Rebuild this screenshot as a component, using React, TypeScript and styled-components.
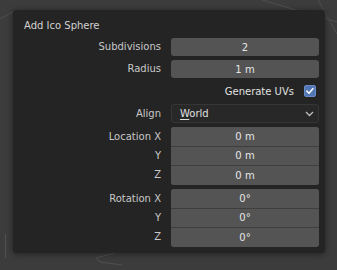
import React from "react";
import styled, { createGlobalStyle } from "styled-components";

const Global = createGlobalStyle`
  html, body { margin: 0; padding: 0; background: #3c3c3c; }
  body { width: 337px; height: 270px; overflow: hidden; font-family: "DejaVu Sans", "Liberation Sans", sans-serif; }
`;

const Viewport = styled.div`
  position: relative;
  width: 337px;
  height: 270px;
  background: #3c3c3c;
  padding: 10px 0 0 13px;
  box-sizing: border-box;
`;

const Mesh = styled.svg`
  position: absolute;
  left: 0;
  top: 0;
  width: 337px;
  height: 270px;
  pointer-events: none;
`;

const Panel = styled.div`
  position: relative;
  width: 312px;
  height: 243px;
  box-sizing: border-box;
  background: #242424;
  border-radius: 3px;
  box-shadow: 0 1px 6px rgba(0, 0, 0, 0.45);
  padding: 0 6px 6px 0;
  display: flex;
  flex-direction: column;
`;

const Header = styled.div`
  height: 29px;
  padding: 3px 0 0 11px;
  box-sizing: border-box;
  display: flex;
  align-items: center;
  font-size: 10px;
  color: #d2d2d2;
`;

const Rows = styled.div`
  display: flex;
  flex-direction: column;
  gap: 4px;
`;

const Row = styled.div`
  display: grid;
  grid-template-columns: 148px 148px;
  column-gap: 10px;
  align-items: start;
`;

const Labels = styled.div<{ $h: number }>`
  display: flex;
  flex-direction: column;
  justify-content: space-around;
  height: ${(p) => p.$h}px;
`;

const Label = styled.div`
  font-size: 10px;
  color: #c8c8c8;
  text-align: right;
  line-height: 18px;
`;

const Field = styled.div<{ $h?: number }>`
  height: ${(p) => p.$h ?? 18}px;
  background: #545454;
  border-radius: 3px;
  display: flex;
  align-items: center;
  justify-content: center;
  font-size: 10px;
  color: #e6e6e6;
`;

const Group = styled.div`
  height: 58px;
  display: grid;
  grid-template-rows: repeat(3, 1fr);
  row-gap: 1px;
  background: #3e3e3e;
  border-radius: 3px;
  overflow: hidden;
`;

const Cell = styled.div`
  background: #545454;
  display: flex;
  align-items: center;
  justify-content: center;
  font-size: 10px;
  color: #e6e6e6;
`;

const CheckRow = styled.div`
  height: 18px;
  display: flex;
  align-items: center;
  justify-content: flex-end;
  gap: 10px;
  padding-right: 3px;
  font-size: 10px;
  color: #e0e0e0;
`;

const Check = styled.div`
  width: 12px;
  height: 12px;
  box-sizing: border-box;
  border-radius: 2px;
  background: #5277b5;
  border: 1px solid #6a8cc4;
  display: flex;
  align-items: center;
  justify-content: center;
`;

const Dropdown = styled.div`
  height: 19px;
  box-sizing: border-box;
  background: #282828;
  border: 1px solid #363636;
  border-radius: 3px;
  display: flex;
  align-items: center;
  justify-content: space-between;
  padding: 0 4px 0 8px;
  font-size: 10px;
  color: #e0e0e0;
`;

const Accel = styled.span`
  text-decoration: underline;
  text-underline-offset: 2px;
`;

const Chevron = () => (
  <svg width="9" height="6" viewBox="0 0 9 6">
    <path d="M1 1 L4.5 4.5 L8 1" stroke="#bdbdbd" strokeWidth="1.3" fill="none" />
  </svg>
);

const Tick = () => (
  <svg width="10" height="10" viewBox="0 0 10 10">
    <path d="M1.8 5 L4 7.2 L8 2.6" stroke="#ffffff" strokeWidth="1.5" fill="none" strokeLinecap="round" strokeLinejoin="round" />
  </svg>
);

export default function App() {
  return (
    <>
      <Global />
      <Viewport>
        <Mesh viewBox="0 0 337 270">
          <g stroke="#505050" strokeWidth="1" fill="none">
            <path d="M0 19 L16 10" />
            <path d="M262 0 L337 22" />
            <path d="M318 0 L337 34" />
            <path d="M5.5 234 L5.5 258" />
            <path d="M96 258 L118 252 M100 262 L122 265 M96 258 L100 262" />
          </g>
        </Mesh>
        <Panel>
          <Header>Add Ico Sphere</Header>
          <Rows>
            <Row>
              <Labels $h={18}><Label>Subdivisions</Label></Labels>
              <Field>2</Field>
            </Row>
            <Row>
              <Labels $h={18}><Label>Radius</Label></Labels>
              <Field>1 m</Field>
            </Row>
            <Row>
              <div />
              <CheckRow>
                Generate UVs
                <Check><Tick /></Check>
              </CheckRow>
            </Row>
            <Row>
              <Labels $h={19}><Label>Align</Label></Labels>
              <Dropdown>
                <span><Accel>W</Accel>orld</span>
                <Chevron />
              </Dropdown>
            </Row>
            <Row>
              <Labels $h={58}>
                <Label>Location X</Label>
                <Label>Y</Label>
                <Label>Z</Label>
              </Labels>
              <Group>
                <Cell>0 m</Cell>
                <Cell>0 m</Cell>
                <Cell>0 m</Cell>
              </Group>
            </Row>
            <Row>
              <Labels $h={58}>
                <Label>Rotation X</Label>
                <Label>Y</Label>
                <Label>Z</Label>
              </Labels>
              <Group>
                <Cell>0°</Cell>
                <Cell>0°</Cell>
                <Cell>0°</Cell>
              </Group>
            </Row>
          </Rows>
        </Panel>
      </Viewport>
    </>
  );
}
